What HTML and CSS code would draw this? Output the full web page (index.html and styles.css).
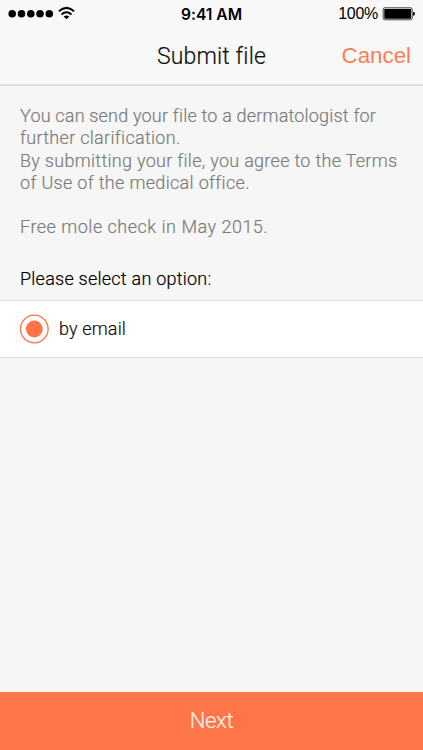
FILE: index.html
```html
<!DOCTYPE html>
<html lang="en">
<head>
<meta charset="utf-8">
<title>Submit file</title>
<link rel="stylesheet" href="styles.css">
</head>
<body>
<header>
  <div class="status">
    <svg class="signal" width="68" height="16" viewBox="0 0 68 16"><g><circle cx="4.2" cy="7.7" r="3.8"/><circle cx="13.5" cy="7.7" r="3.8"/><circle cx="22.8" cy="7.7" r="3.8"/><circle cx="32" cy="7.7" r="3.8"/><circle cx="41.3" cy="7.7" r="3.8"/></g><g fill="none" stroke="#000" stroke-width="2"><path d="M50.9 5.2Q58.5-1.4 66.1 5.2"/><path d="M53.5 8.4Q58.5 4.2 63.5 8.4"/></g><path d="M55.6 10.5Q58.5 8.3 61.4 10.5L58.5 13.3Z"/></svg>
    <span class="time">9:41 AM</span>
    <span class="power"><span class="percent">100%</span><svg width="33" height="14" viewBox="0 0 33 14"><rect x="1.2" y=".8" width="29" height="12" rx="1.5" fill="#eee" stroke="#333" stroke-width=".9"/><rect x="2.3" y="1.9" width="26.8" height="9.8" rx=".6"/><path d="M31 4.8Q33 5 33 6.8T31 8.8Z"/></svg></span>
  </div>
  <div class="nav"><h1>Submit file</h1><span class="cancel">Cancel</span></div>
</header>
<main>
  <p class="copy"><span class="l1">You can send your file to a dermatologist for</span><span class="l2">further clarification.</span><span class="l3">By submitting your file, you agree to the Terms</span><span class="l4">of Use of the medical office.</span></p>
  <p class="copy promo"><span class="l5">Free mole check in May 2015.</span></p>
  <h2>Please select an option:</h2>
  <div class="option"><svg width="30" height="30" viewBox="0 0 30 30"><circle cx="15.3" cy="15" r="13.8" fill="none" stroke="#ff7549" stroke-width="1.3"/><circle cx="15.3" cy="15" r="8.4" fill="#ff7549"/></svg><span>by email</span></div>
</main>
<footer>Next</footer>
</body>
</html>
```
FILE: styles.css
```css
* { box-sizing: border-box; }
body { margin: 0; height: 750px; display: flex; flex-direction: column; background: #f6f6f6; font-family: Roboto, sans-serif; font-weight: 300; font-variant-ligatures: none; overflow: hidden; white-space: nowrap; }
header { height: 86px; background: #f8f8f8; border-bottom: 2px solid #dcdcdc; }
.status { height: 28px; display: grid; grid-template-columns: 1fr auto 1fr; align-items: center; padding: 0 8px; font-weight: 400; color: #000; }
.time { font-family: Inter, sans-serif; font-weight: 600; font-size: 15.6px; }
.power { justify-self: end; display: flex; align-items: center; gap: 4px; }
.percent { font-family: "Liberation Sans", sans-serif; font-size: 16px; letter-spacing: -.3px; }
.nav { height: 56px; display: grid; grid-template-columns: 1fr auto 1fr; align-items: center; padding-right: 12px; }
h1 { grid-column: 2; margin: 0 -12px 0 0; font-size: 23px; font-weight: 300; letter-spacing: .15px; color: #111; -webkit-text-stroke: .2px; }
.cancel { justify-self: end; font-family: "Liberation Sans", sans-serif; font-weight: 400; font-size: 22.3px; color: #ff7e57; }
main { flex: 1; padding-top: 19px; }
.copy { margin: 0 0 0 20px; font-size: 18px; line-height: 22.25px; color: #7c7c7c; -webkit-text-stroke: .2px; }
.copy span { display: block; }
.l1 { letter-spacing: .19px; }
.l2 { letter-spacing: .3px; }
.l3 { letter-spacing: .29px; }
.l4 { letter-spacing: .32px; }
.l5 { letter-spacing: .5px; }
.promo { margin-top: 22px; }
h2 { margin: 29.75px 0 0 20px; font-size: 18px; line-height: 22px; font-weight: 300; letter-spacing: .24px; color: #000; -webkit-text-stroke: .2px; }
.option { margin-top: 10px; height: 58px; display: flex; align-items: center; gap: 10px; padding-left: 19px; background: #fff; border-top: 1px solid #ddd; border-bottom: 1px solid #ddd; font-size: 18px; letter-spacing: .15px; color: #111; -webkit-text-stroke: .2px; }
.option svg, .option span { margin-top: -1px; }
footer { height: 58px; padding-bottom: 2px; background: #ff754a; color: #ffefe5; display: flex; align-items: center; justify-content: center; font-size: 22px; letter-spacing: -.3px; -webkit-text-stroke: .2px; }
```
